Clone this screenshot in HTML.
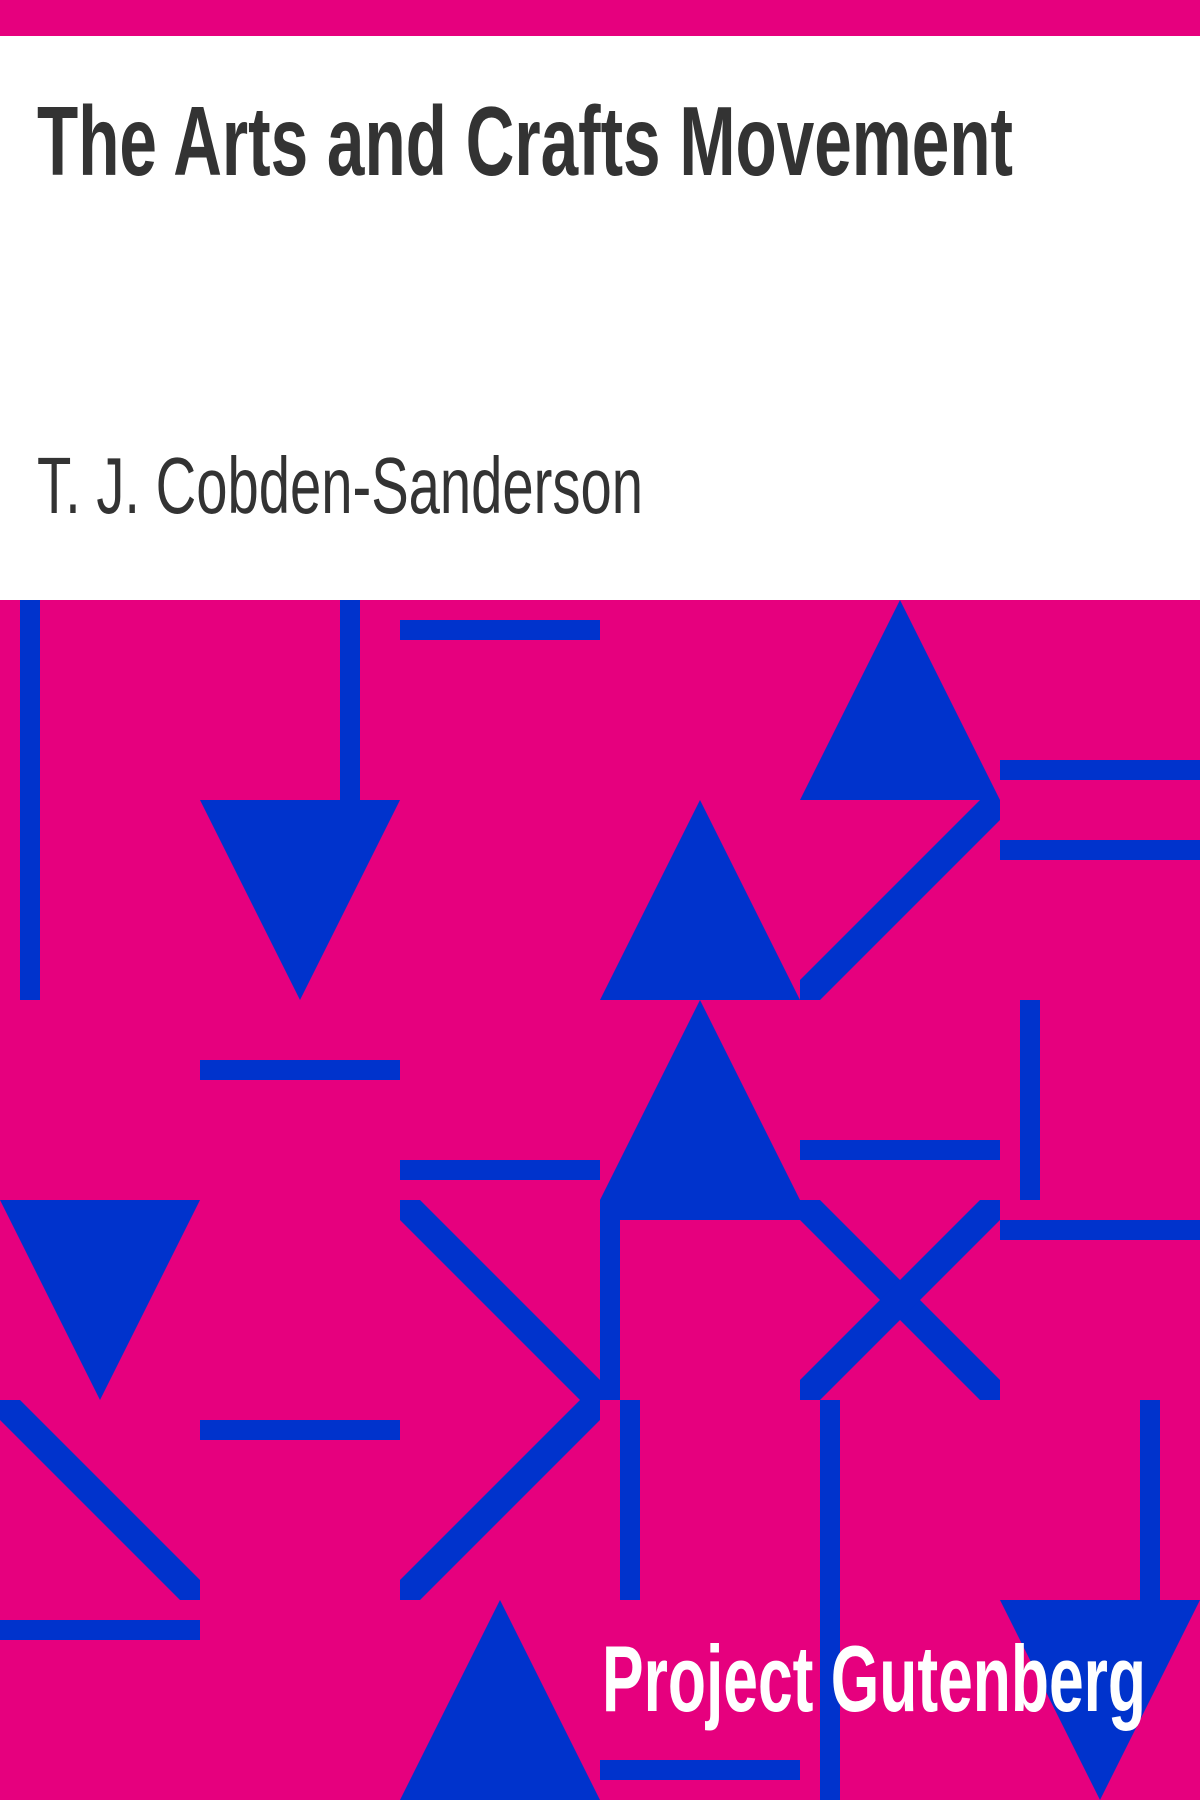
<!DOCTYPE html>
<html><head><meta charset="utf-8"><style>
html,body{margin:0;padding:0;background:#fff;}
svg{display:block;}
</style></head><body>
<svg width="1200" height="1800" viewBox="0 0 1200 1800" xmlns="http://www.w3.org/2000/svg">
<rect x="0" y="0" width="1200" height="36" fill="#e6007e"/>
<rect x="0" y="600" width="1200" height="1200" fill="#e6007e"/>
<g fill="#0033cc">
<rect x="20" y="600" width="20" height="400"/>
<rect x="340" y="600" width="20" height="200"/>
<polygon points="200,800 400,800 300,1000"/>
<rect x="400" y="620" width="200" height="20"/>
<polygon points="800,800 1000,800 900,600"/>
<rect x="1000" y="760" width="200" height="20"/>
<rect x="1000" y="840" width="200" height="20"/>
<polygon points="980,800 1000,800 1000,820 820,1000 800,1000 800,980"/>
<polygon points="600,1000 800,1000 700,800"/>
<polygon points="600,1200 800,1200 700,1000"/>
<rect x="600" y="1200" width="200" height="20"/>
<rect x="600" y="1200" width="20" height="200"/>
<rect x="200" y="1060" width="200" height="20"/>
<rect x="400" y="1160" width="200" height="20"/>
<rect x="1020" y="1000" width="20" height="200"/>
<rect x="800" y="1140" width="200" height="20"/>
<rect x="1000" y="1220" width="200" height="20"/>
<polygon points="0,1200 200,1200 100,1400"/>
<polygon points="400,1200 420,1200 600,1380 600,1400 580,1400 400,1220"/>
<polygon points="580,1400 600,1400 600,1420 420,1600 400,1600 400,1580"/>
<polygon points="800,1200 820,1200 1000,1380 1000,1400 980,1400 800,1220"/>
<polygon points="980,1200 1000,1200 1000,1220 820,1400 800,1400 800,1380"/>
<polygon points="0,1400 20,1400 200,1580 200,1600 180,1600 0,1420"/>
<rect x="200" y="1420" width="200" height="20"/>
<rect x="0" y="1620" width="200" height="20"/>
<rect x="620" y="1400" width="20" height="200"/>
<rect x="820" y="1400" width="20" height="400"/>
<rect x="1140" y="1400" width="20" height="200"/>
<polygon points="1000,1600 1200,1600 1100,1800"/>
<polygon points="400,1800 600,1800 500,1600"/>
<rect x="600" y="1760" width="200" height="20"/>
</g>
<text x="37" y="175" font-family="'Liberation Sans Narrow','Liberation Sans',sans-serif" font-weight="bold" font-size="98" fill="#333" textLength="976" lengthAdjust="spacingAndGlyphs">The Arts and Crafts Movement</text>
<text x="37" y="513" font-family="'Liberation Sans Narrow','Liberation Sans',sans-serif" font-size="80" fill="#333" textLength="606" lengthAdjust="spacingAndGlyphs">T. J. Cobden-Sanderson</text>
<text x="602" y="1711" font-family="'Liberation Sans Narrow','Liberation Sans',sans-serif" font-weight="bold" font-size="94" fill="#fff" textLength="544" lengthAdjust="spacingAndGlyphs">Project Gutenberg</text>
</svg>
</body></html>
